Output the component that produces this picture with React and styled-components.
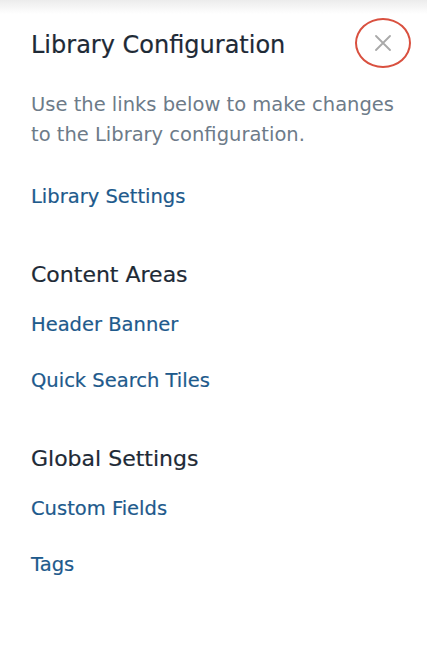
import React from 'react';
import styled, { createGlobalStyle } from 'styled-components';

const GlobalStyle = createGlobalStyle`
    body {
        margin: 0;
        background: #fff;
        font-family: "DejaVu Sans", "Noto Sans", sans-serif;
    }
`;

const Panel = styled.div`
    position: relative;
    width: 427px;
    height: 647px;
    box-sizing: border-box;
    padding: 28px 31px 0 31px;
    background: linear-gradient(to bottom, #ececec 0px, #ffffff 14px);
`;

const Header = styled.div`
    display: flex;
    align-items: center;
    justify-content: space-between;
    height: 34px;
`;

const Title = styled.h2`
    margin: 0;
    font-size: 24px;
    font-weight: 400;
    color: #1e2a36;
    -webkit-text-stroke: 0.2px #1e2a36;
`;

const CloseButton = styled.button`
    position: relative;
    width: 34px;
    height: 34px;
    margin: -4px -4px 0 0;
    border: none;
    background: none;
    padding: 0;
    display: flex;
    align-items: center;
    justify-content: center;
    cursor: pointer;
`;

const Ring = styled.span`
    position: absolute;
    left: -11px;
    top: -8px;
    width: 56px;
    height: 50px;
    border: 2.5px solid #d9503f;
    border-radius: 50%;
    box-sizing: border-box;
    pointer-events: none;
`;

const Description = styled.p`
    margin: 28px -12px 0 0;
    font-size: 19.5px;
    line-height: 30px;
    color: #6d7b89;
`;

const Section = styled.div`
    display: flex;
    flex-direction: column;
    margin-top: ${props => props.top}px;
`;

const SectionTitle = styled.h3`
    margin: 0 0 24px 0;
    font-size: 22px;
    font-weight: 400;
    line-height: 26px;
    color: #1e2a36;
    -webkit-text-stroke: 0.2px #1e2a36;
`;

const LinkItem = styled.a`
    display: block;
    font-size: 19.5px;
    font-weight: 400;
    line-height: 26px;
    color: #1e5a8c;
    -webkit-text-stroke: 0.2px #1e5a8c;
    text-decoration: none;
    margin-bottom: 30px;
`;

const XIcon = () => (
    <svg width="16" height="16" viewBox="0 0 16 16">
        <path d="M1 1 L15 15 M15 1 L1 15" stroke="#a9a9a9" strokeWidth="1.8" strokeLinecap="round" />
    </svg>
);

export default function App() {
    return (
        <Panel>
            <GlobalStyle />
            <Header>
                <Title>Library Configuration</Title>
                <CloseButton aria-label="Close">
                    <XIcon />
                    <Ring />
                </CloseButton>
            </Header>
            <Description>
                Use the links below to make changes to the Library configuration.
            </Description>
            <Section top={34}>
                <LinkItem href="#">Library Settings</LinkItem>
            </Section>
            <Section top={22}>
                <SectionTitle>Content Areas</SectionTitle>
                <LinkItem href="#">Header Banner</LinkItem>
                <LinkItem href="#">Quick Search Tiles</LinkItem>
            </Section>
            <Section top={22}>
                <SectionTitle>Global Settings</SectionTitle>
                <LinkItem href="#">Custom Fields</LinkItem>
                <LinkItem href="#">Tags</LinkItem>
            </Section>
        </Panel>
    );
}
